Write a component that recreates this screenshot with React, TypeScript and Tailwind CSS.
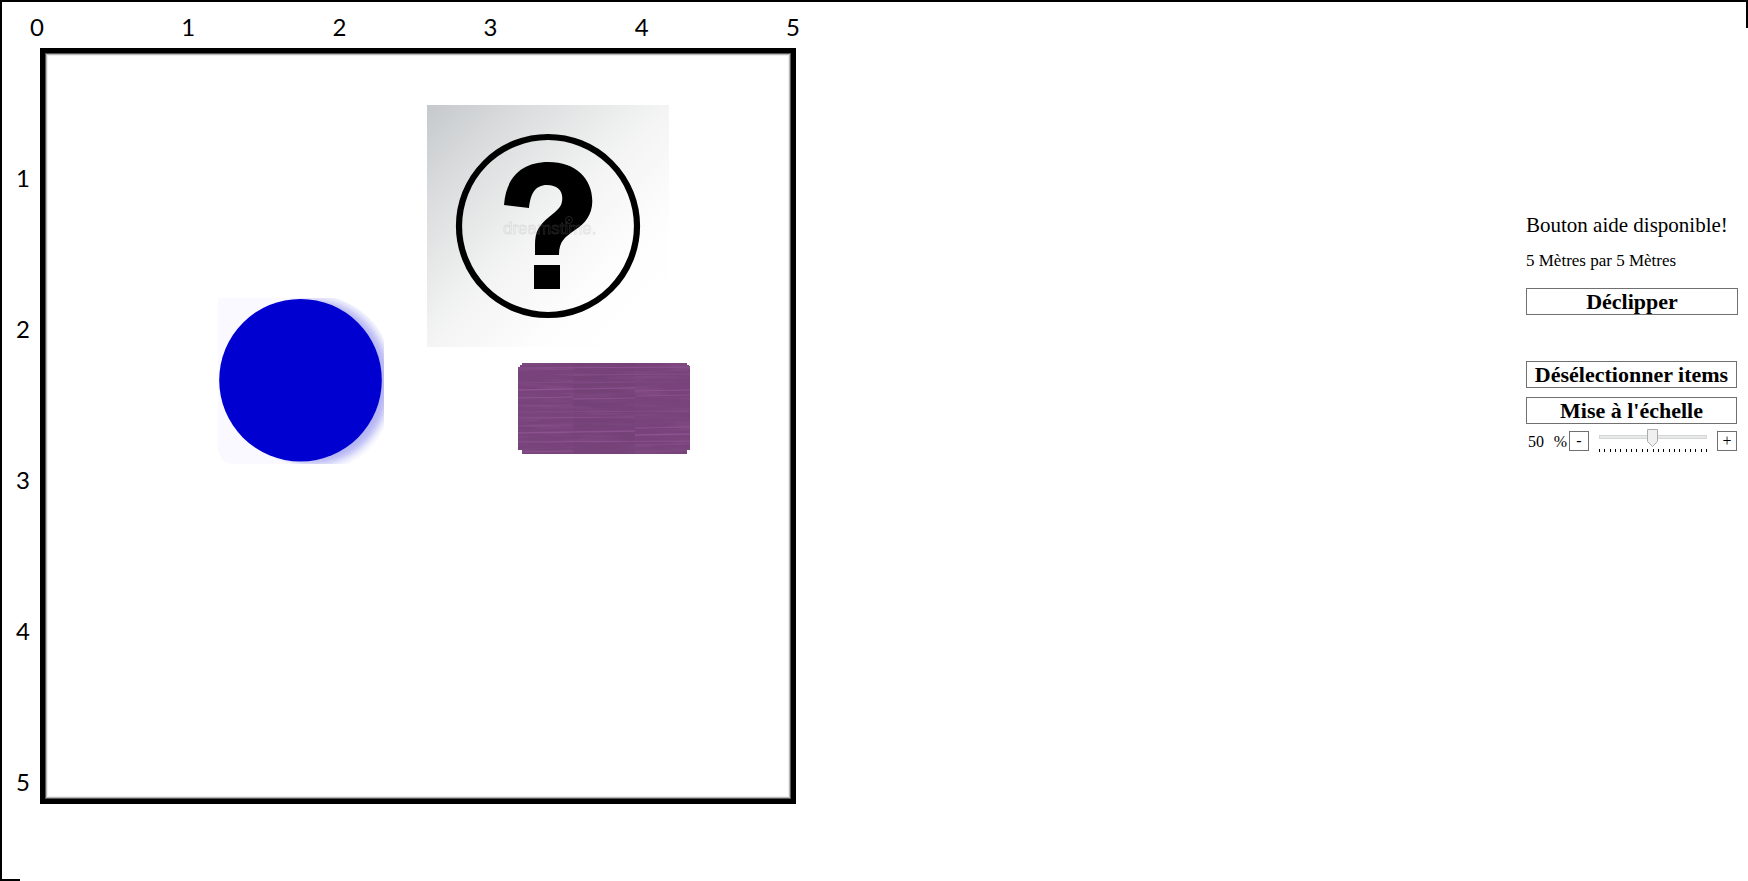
import { useState } from "react";

const topMarks = [0, 1, 2, 3, 4, 5];
const sideMarks = [1, 2, 3, 4, 5];
const ticks = Array.from({ length: 21 }, (_, i) => i);

const grain = [
  [0, 4, 172, 1], [0, 6, 56, 0.6], [56, 11, 116, 0.7], [0, 19, 55, 0.6], [55, 19, 62, 0.5],
  [0, 26, 55, 1.4], [55, 25, 62, 1.2], [117, 27, 55, 1.2], [0, 34, 55, 1], [55, 35, 62, 1],
  [117, 32, 55, 0.8], [0, 42, 55, 0.6], [0, 48, 172, 0.6], [0, 54, 117, 0.8], [0, 62, 55, 0.6],
  [117, 64, 55, 0.9], [0, 69, 55, 1.3], [55, 68, 62, 1.3], [117, 71, 55, 1.4], [0, 78, 172, 1],
  [117, 81, 55, 0.6], [0, 88, 55, 1],
];

function QuestionTile() {
  return (
    <svg viewBox="0 0 242 242" className="block size-full" role="img" aria-label="Item">
      <defs>
        <linearGradient id="tile" x1="0" y1="0" x2="1" y2="1">
          <stop offset="0" stopColor="#c5c9cb" />
          <stop offset="0.2" stopColor="#dadcdd" />
          <stop offset="0.4" stopColor="#ebeded" />
          <stop offset="0.5" stopColor="#f4f4f4" />
          <stop offset="0.75" stopColor="#fefefe" />
          <stop offset="1" stopColor="#ffffff" />
        </linearGradient>
      </defs>
      <rect width="242" height="242" fill="url(#tile)" />
      <circle cx="121" cy="121" r="89" fill="none" stroke="#000" strokeWidth="6.2" />
      <path
        d="M77 100C79 73 94 57 121.500 57C149 57 165.300 74 165.300 96C165.300 110 158 118.500 148 125C138 132 132 136 132 150H108V140C108 126 112 120.500 122 112C131 104.500 135.300 102 135.300 93C135.300 85 129.500 80 120 80C108 80 103.500 89 102 103Z"
        fill="#000"
      />
      <rect x="107" y="160" width="26" height="24" fill="#000" />
      <g opacity="0.22">
        <text x="76" y="129" fontFamily="'Liberation Sans', sans-serif" fontSize="17" fill="none" stroke="#999" strokeWidth="0.8">
          dreamstime.
        </text>
        <circle cx="142" cy="115" r="3.500" fill="none" stroke="#aaa" />
        <circle cx="142" cy="115" r="1" fill="#aaa" />
      </g>
    </svg>
  );
}

function BlueTile() {
  return (
    <svg viewBox="0 0 166 166" className="block size-full" role="img" aria-label="Item">
      <defs>
        <filter id="soft" x="-20%" y="-20%" width="140%" height="140%">
          <feGaussianBlur stdDeviation="4" />
        </filter>
        <linearGradient id="paper" x1="0" y1="0" x2="1" y2="0">
          <stop offset="0" stopColor="#f8f8ff" />
          <stop offset="0.7" stopColor="#fbfbff" />
          <stop offset="1" stopColor="#ffffff" />
        </linearGradient>
        <clipPath id="sheet">
          <path d="M0 0H118C145 10 160 25 166 42V130C158 148 145 160 130 166H14Q2 164 0 150Z" />
        </clipPath>
      </defs>
      <g clipPath="url(#sheet)">
        <rect width="166" height="166" fill="url(#paper)" />
        <ellipse cx="98" cy="84" rx="74" ry="82" fill="#9a9af0" opacity="0.75" filter="url(#soft)" />
        <path d="M0 0H84A81 81 0 0 0 84 166H0Z" fill="#f9f9ff" />
      </g>
      <circle cx="82.500" cy="82.200" r="81.300" fill="#0000d0" />
    </svg>
  );
}

function WoodTile() {
  return (
    <svg viewBox="0 0 172 91" className="block size-full" role="img" aria-label="Item">
      <defs>
        <clipPath id="plank">
          <path d="M4 0H169V2H171V3H172V87H169V91H4V87H0V4H2V2H4Z" />
        </clipPath>
        <filter id="fibre" x="0" y="0" width="100%" height="100%">
          <feTurbulence type="fractalNoise" baseFrequency="0.02 0.3" numOctaves="2" seed="4" />
          <feColorMatrix values="0 0 0 0 0.56  0 0 0 0 0.28  0 0 0 0 0.56  1.6 0 0 0 -0.62" />
        </filter>
      </defs>
      <g clipPath="url(#plank)">
        <rect width="172" height="91" fill="#77437a" />
        <rect width="172" height="91" filter="url(#fibre)" opacity="0.15" />
        <rect x="55" width="62" height="91" fill="#6c3d70" opacity="0.15" />
        {grain.map(([x, y, w, h], i) => (
          <path key={i} d={`M${x} ${y + 1}Q${x + w / 2} ${y + 0.6} ${x + w} ${y}`} fill="none" stroke="#a060a3" strokeWidth={h} opacity="0.5" />
        ))}
      </g>
    </svg>
  );
}

const button =
  "flex h-[27px] items-center justify-center whitespace-nowrap border border-[#707070] bg-white text-[22px] font-bold leading-6";
const step = "flex size-5 items-center justify-center border border-[#707070] bg-white text-base leading-4";

export default function App() {
  const [scale, setScale] = useState(50);
  const change = (n: number) => setScale(Math.max(0, Math.min(100, n)));

  return (
    <main className="relative flex min-h-screen items-start justify-between border-l-2 border-t-2 border-black bg-white font-['Liberation_Serif',serif] text-black">
      <span className="absolute right-0 top-0 h-[26px] w-0.5 bg-black" />
      <span className="absolute bottom-0 left-0 h-0.5 w-[18px] bg-black" />

      <section className="shrink-0 font-[Lato,sans-serif] text-2xl leading-8">
        <div className="-mr-[9px] flex h-[46px] items-center justify-between pl-[23px] pt-1">
          {topMarks.map((n) => (
            <span key={n} className="w-6 text-center">{n}</span>
          ))}
        </div>
        <div className="flex">
          <div className="flex w-[38px] flex-col items-center justify-between pb-1.5 pl-1 pt-[114px]">
            {sideMarks.map((n) => (
              <span key={n}>{n}</span>
            ))}
          </div>
          <div className="relative aspect-square w-[756px] border-[5px] border-black shadow-[inset_0_0_0_1px_#555,inset_0_0_0_2px_#b8bbb9,inset_0_0_0_3px_#eee]">
            <div className="absolute left-[382px] top-[52px] size-[242px]"><QuestionTile /></div>
            <div className="absolute left-[173px] top-[245px] size-[166px]"><BlueTile /></div>
            <div className="absolute left-[473px] top-[310px] h-[91px] w-[172px]"><WoodTile /></div>
          </div>
        </div>
      </section>

      <aside className="mr-2.5 flex w-[212px] shrink-0 flex-col pt-[209px]">
        <p className="whitespace-nowrap text-[21px] leading-7">Bouton aide disponible!</p>
        <p className="mt-2.5 whitespace-nowrap text-[17px] leading-6">5 Mètres par 5 Mètres</p>
        <button type="button" className={`${button} mt-[15px]`}>Déclipper</button>
        <div className="mr-px mt-[46px] flex flex-col">
          <button type="button" className={button}>Désélectionner items</button>
          <button type="button" className={`${button} mt-[9px]`}>Mise à l'échelle</button>
          <div className="mt-[5px] flex h-6 items-center">
            <label htmlFor="scale" className="flex w-[43px] justify-between px-0.5 pt-0.5 text-base leading-5">
              <span>{scale}</span>
              <span>%</span>
            </label>
            <button type="button" aria-label="Réduire" className={step} onClick={() => change(scale - 5)}>-</button>
            <div className="relative mx-2.5 h-6 flex-1">
              <svg viewBox="0 0 108 24" className="block size-full" aria-hidden="true">
                <rect x="0.5" y="6.5" width="107" height="3" fill="#e7eaea" stroke="#d6d6d6" />
                {ticks.map((i) => (
                  <rect key={i} x={Math.round(i * 5.35)} y="20" width="1" height="3" fill="#000" />
                ))}
                <path
                  d="M0.500 0.500H10.500V12.500L5.500 17.500L0.500 12.500Z"
                  transform={`translate(${Math.round((scale / 100) * 96)} 0)`}
                  fill="#f0f0f0"
                  stroke="#acacac"
                />
              </svg>
              <input
                id="scale"
                type="range"
                min="0"
                max="100"
                step="5"
                value={scale}
                onChange={(e) => change(Number(e.target.value))}
                className="absolute inset-0 m-0 size-full cursor-pointer opacity-0"
              />
            </div>
            <button type="button" aria-label="Agrandir" className={step} onClick={() => change(scale + 5)}>+</button>
          </div>
        </div>
      </aside>
    </main>
  );
}
